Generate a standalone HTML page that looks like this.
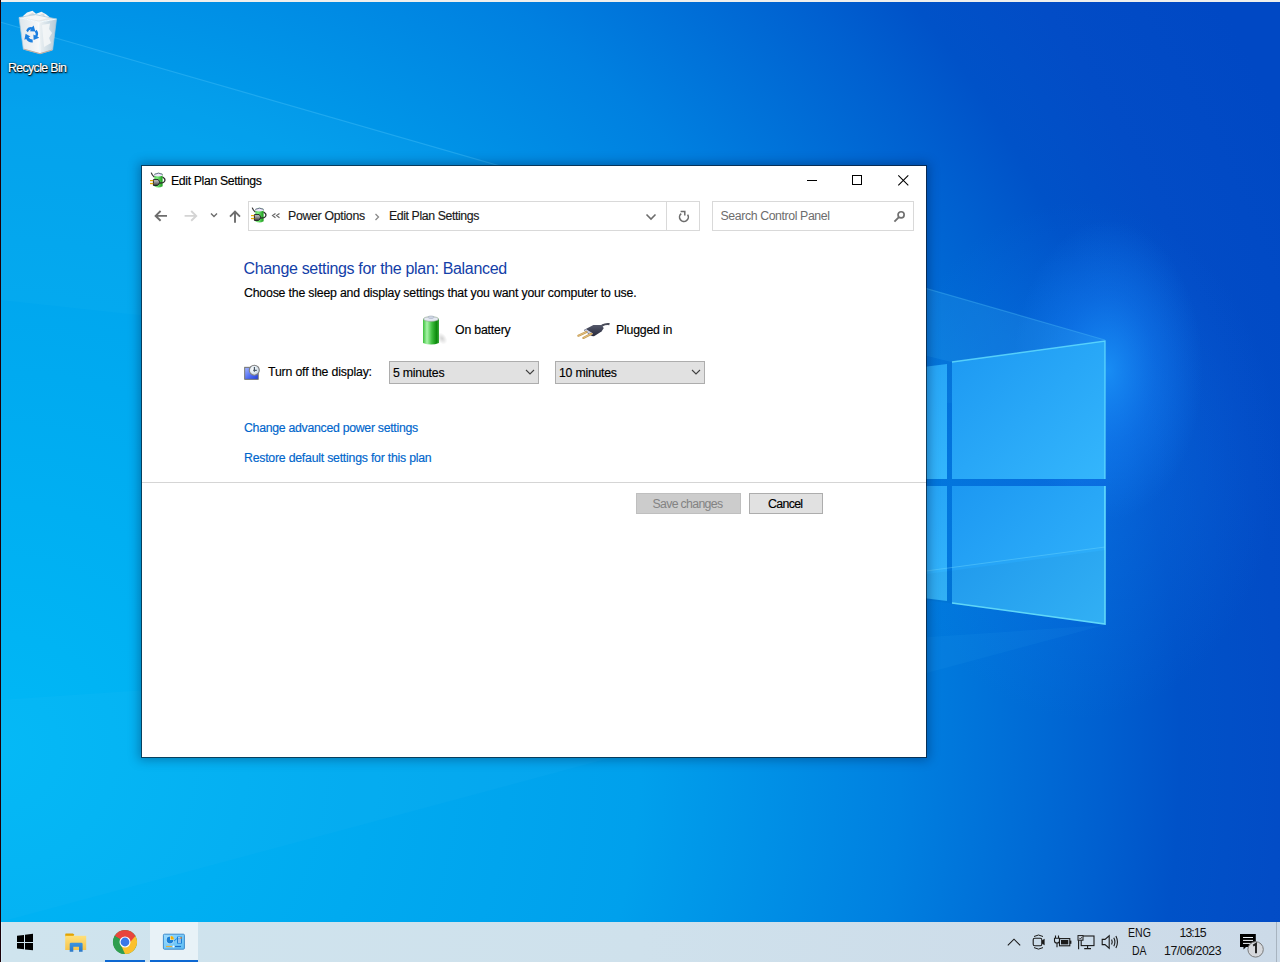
<!DOCTYPE html>
<html><head><meta charset="utf-8">
<style>
html,body{margin:0;padding:0;width:1280px;height:962px;overflow:hidden;background:#0078d7;}
body{position:relative;font-family:"Liberation Sans",sans-serif;}
.abs{position:absolute;}
.t{position:absolute;white-space:nowrap;line-height:16px;font-size:12px;color:#000;-webkit-text-stroke:0.15px currentColor;}
#wall{position:absolute;left:0;top:0;width:1280px;height:922px;}
#win{position:absolute;left:141px;top:165px;width:784px;height:591px;background:#fff;background-clip:padding-box;border:1px solid rgba(10,20,30,0.62);box-shadow:0 0 10px 2px rgba(0,20,60,0.35);}
#taskbar{position:absolute;left:0;top:922px;width:1280px;height:40px;background:linear-gradient(90deg,#cfe4ee 0%,#cfe1ec 50%,#ccdae8 100%);}
</style></head><body>
<svg id="wall" width="1280" height="922" viewBox="0 0 1280 922">
<defs>
<radialGradient id="g1" gradientUnits="userSpaceOnUse" cx="0" cy="750" r="1430">
<stop offset="0" stop-color="#00b8f6"/>
<stop offset="0.08" stop-color="#00b4f4"/>
<stop offset="0.448" stop-color="#00a0ec"/>
<stop offset="0.63" stop-color="#0080e0"/>
<stop offset="0.77" stop-color="#0060d0"/>
<stop offset="0.825" stop-color="#0052c8"/>
<stop offset="0.895" stop-color="#024cc6"/>
<stop offset="1" stop-color="#0048c4"/>
</radialGradient>
<radialGradient id="glow" cx="0" cy="0" r="1" gradientUnits="userSpaceOnUse" gradientTransform="translate(1108 370) scale(95 150)">
<stop offset="0" stop-color="#1e9cff" stop-opacity="0.75"/>
<stop offset="0.5" stop-color="#1a8cff" stop-opacity="0.35"/>
<stop offset="1" stop-color="#1a8cff" stop-opacity="0"/>
</radialGradient>
<radialGradient id="glow2" cx="0" cy="0" r="1" gradientUnits="userSpaceOnUse" gradientTransform="translate(1080 460) scale(200 260)">
<stop offset="0" stop-color="#1a8cff" stop-opacity="0.3"/>
<stop offset="1" stop-color="#1a8cff" stop-opacity="0"/>
</radialGradient>
<linearGradient id="pane" x1="0" y1="0" x2="1" y2="1">
<stop offset="0" stop-color="#1c98f2"/>
<stop offset="1" stop-color="#34b6fc"/>
</linearGradient>
</defs>
<rect width="1280" height="922" fill="url(#g1)"/>
<rect width="1280" height="922" fill="url(#glow2)"/>
<rect width="1280" height="922" fill="url(#glow)"/>
<polygon points="0,22 1105,340 1105,420 0,300" fill="#50d0ff" opacity="0.05"/>
<polygon points="700,223 1105,340 1105,400 700,300" fill="#50d0ff" opacity="0.11"/>
<polygon points="1105,625 0,922 0,700" fill="#50d0ff" opacity="0.06"/>
<line x1="0" y1="22" x2="1105" y2="340" stroke="#60d0ff" stroke-width="1.2" opacity="0.3"/>
<polygon points="780,385 947,364 947,479 780,479" fill="url(#pane)"/>
<polygon points="952,362 1105,341 1105,479 952,479" fill="url(#pane)"/>
<polygon points="780,486 947,486 947,601 780,580" fill="url(#pane)"/>
<polygon points="952,486 1105,486 1105,624 952,603" fill="url(#pane)"/>
<polyline points="952,362 1105,341 1105,479" fill="none" stroke="#6ae4ff" stroke-width="1.4" opacity="0.75"/>
<polyline points="1105,486 1105,624 952,603" fill="none" stroke="#6ae4ff" stroke-width="1.6" opacity="0.9"/>
<line x1="926" y1="571" x2="1105" y2="547" stroke="#7ae0ff" stroke-width="1" opacity="0.35"/>
<polygon points="926,574 1105,550 1105,624 926,600" fill="#000" opacity="0.03"/>
</svg>

<div id="win"></div>
<!-- title bar -->
<svg class="abs" style="left:150px;top:172px" width="16" height="16" viewBox="0 0 16 16">
<defs><linearGradient id="pg150" x1="0" x2="1" y1="0" y2="0"><stop offset="0" stop-color="#5ccf5c"/><stop offset="0.35" stop-color="#7ae87a"/><stop offset="1" stop-color="#189a18"/></linearGradient>
<linearGradient id="pp150" x1="0" x2="0" y1="0" y2="1"><stop offset="0" stop-color="#d8d8d8"/><stop offset="1" stop-color="#404040"/></linearGradient></defs>
<path d="M4.3 2.2 Q8.4 -0.6 12.6 2.2 L12.6 14.2 Q8.4 16.6 4.3 14.2 Z" fill="url(#pg150)"/>
<path d="M4.3 2.2 Q8.4 -0.2 12.6 2.2 L12.6 3.8 Q8.4 5 4.3 3.8 Z" fill="#ece8fa"/>
<path d="M4.3 2.4 Q8.4 0 12.6 2.4" fill="none" stroke="#55557a" stroke-width="0.8"/>
<path d="M1.2 0.6 Q2 3 4.2 5" fill="none" stroke="#333" stroke-width="1.2"/>
<path d="M12.6 5 Q16 7 14.5 9.5 Q13.5 11 9.5 11.2" fill="none" stroke="#2a2a2a" stroke-width="1.3"/>
<path d="M3.4 7.6 L8.2 7.6 Q9.6 9.2 9.6 10.6 Q9 12.5 7.4 13.4 L3.4 13.4 Z" fill="url(#pp150)" stroke="#151515" stroke-width="0.9"/>
<rect x="0" y="8" width="3.3" height="1.2" fill="#e4ac00"/>
<rect x="0" y="10.9" width="3.3" height="1.3" fill="#e4ac00"/>
</svg>
<div class="t" style="left:171.0px;top:172.52px;font-size:12.3px;letter-spacing:-0.370px;color:#000">Edit Plan Settings</div>
<!-- window controls -->
<div class="abs" style="left:807px;top:180px;width:10px;height:1px;background:#000"></div>
<div class="abs" style="left:852px;top:175px;width:8px;height:8px;border:1px solid #000"></div>
<svg class="abs" style="left:897px;top:175px" width="12" height="12" viewBox="0 0 12 12"><path d="M1.3 0.4 L11.3 10.4 M11.3 0.4 L1.3 10.4" stroke="#000" stroke-width="1.05"/></svg>
<!-- nav -->
<svg class="abs" style="left:154px;top:209px" width="14" height="14" viewBox="0 0 14 14"><path d="M1.8 6.9 H13 M6.6 2 L1.6 6.9 L6.6 11.8" fill="none" stroke="#6d6d6d" stroke-width="1.9"/></svg>
<svg class="abs" style="left:184px;top:209px" width="14" height="14" viewBox="0 0 14 14"><path d="M0.6 6.9 H12 M7.2 2 L12.2 6.9 L7.2 11.8" fill="none" stroke="#d4d4d4" stroke-width="1.9"/></svg>
<svg class="abs" style="left:210px;top:212px" width="8" height="6" viewBox="0 0 8 6"><path d="M1 1.5 L4 4.5 L7 1.5" fill="none" stroke="#6d6d6d" stroke-width="1.4"/></svg>
<svg class="abs" style="left:228px;top:210px" width="14" height="14" viewBox="0 0 14 14"><path d="M7 12.8 V1.8 M2 6.6 L7 1.6 L12 6.6" fill="none" stroke="#6d6d6d" stroke-width="1.9"/></svg>
<!-- address box -->
<div class="abs" style="left:248px;top:201px;width:450px;height:28px;border:1px solid #d9d9d9;background:#fff"></div>
<div class="abs" style="left:666px;top:202px;width:1px;height:28px;background:#d9d9d9"></div>
<svg class="abs" style="left:251px;top:207px" width="16" height="16" viewBox="0 0 16 16">
<defs><linearGradient id="pg251" x1="0" x2="1" y1="0" y2="0"><stop offset="0" stop-color="#5ccf5c"/><stop offset="0.35" stop-color="#7ae87a"/><stop offset="1" stop-color="#189a18"/></linearGradient>
<linearGradient id="pp251" x1="0" x2="0" y1="0" y2="1"><stop offset="0" stop-color="#d8d8d8"/><stop offset="1" stop-color="#404040"/></linearGradient></defs>
<path d="M4.3 2.2 Q8.4 -0.6 12.6 2.2 L12.6 14.2 Q8.4 16.6 4.3 14.2 Z" fill="url(#pg251)"/>
<path d="M4.3 2.2 Q8.4 -0.2 12.6 2.2 L12.6 3.8 Q8.4 5 4.3 3.8 Z" fill="#ece8fa"/>
<path d="M4.3 2.4 Q8.4 0 12.6 2.4" fill="none" stroke="#55557a" stroke-width="0.8"/>
<path d="M1.2 0.6 Q2 3 4.2 5" fill="none" stroke="#333" stroke-width="1.2"/>
<path d="M12.6 5 Q16 7 14.5 9.5 Q13.5 11 9.5 11.2" fill="none" stroke="#2a2a2a" stroke-width="1.3"/>
<path d="M3.4 7.6 L8.2 7.6 Q9.6 9.2 9.6 10.6 Q9 12.5 7.4 13.4 L3.4 13.4 Z" fill="url(#pp251)" stroke="#151515" stroke-width="0.9"/>
<rect x="0" y="8" width="3.3" height="1.2" fill="#e4ac00"/>
<rect x="0" y="10.9" width="3.3" height="1.3" fill="#e4ac00"/>
</svg>
<svg class="abs" style="left:271px;top:212px" width="10" height="8" viewBox="0 0 10 8"><path d="M4.5 1.5 L1.6 3.6 L4.5 5.7 M8.5 1.5 L5.6 3.6 L8.5 5.7" fill="none" stroke="#6a6a6a" stroke-width="1.25"/></svg>
<div class="t" style="left:288.0px;top:207.71px;font-size:12.3px;letter-spacing:-0.298px;color:#1a1a1a">Power Options</div>
<svg class="abs" style="left:374px;top:213px" width="6" height="8" viewBox="0 0 6 8"><path d="M1.5 1 L4.5 4 L1.5 7" fill="none" stroke="#8a8a8a" stroke-width="1.3"/></svg>
<div class="t" style="left:389.0px;top:207.71px;font-size:12.3px;letter-spacing:-0.399px;color:#1a1a1a">Edit Plan Settings</div>
<svg class="abs" style="left:645px;top:213px" width="12" height="8" viewBox="0 0 12 8"><path d="M1.5 1.5 L6 6 L10.5 1.5" fill="none" stroke="#6d6d6d" stroke-width="1.6"/></svg>
<svg class="abs" style="left:677px;top:209px" width="14" height="14" viewBox="0 0 14 14"><path d="M4.2 4.6 A4.4 4.4 0 1 0 10.6 5.6" fill="none" stroke="#6d6d6d" stroke-width="1.6"/><path d="M3.6 2.4 H7.8 V6.6" fill="none" stroke="#6d6d6d" stroke-width="1.5"/></svg>
<!-- search -->
<div class="abs" style="left:712px;top:201px;width:200px;height:28px;border:1px solid #d9d9d9;background:#fff"></div>
<div class="t" style="left:720.5px;top:207.73px;font-size:12.3px;letter-spacing:-0.391px;color:#6d6d6d;-webkit-text-stroke:0">Search Control Panel</div>
<svg class="abs" style="left:892px;top:210px" width="14" height="14" viewBox="0 0 14 14"><circle cx="9.1" cy="4.8" r="3.05" fill="none" stroke="#707070" stroke-width="1.7"/><path d="M6.9 7.1 L2.4 11.7" stroke="#707070" stroke-width="1.9"/></svg>
<!-- content -->
<div class="t" style="left:243.5px;top:260.66px;font-size:16.0px;letter-spacing:-0.328px;color:#1340a8;-webkit-text-stroke:0">Change settings for the plan: Balanced</div>
<div class="t" style="left:244.0px;top:285.26px;font-size:12.3px;letter-spacing:-0.186px;">Choose the sleep and display settings that you want your computer to use.</div>
<svg class="abs" style="left:420px;top:314px" width="28" height="32" viewBox="0 0 28 32">
<defs><linearGradient id="bg1" x1="0" x2="1" y1="0" y2="0"><stop offset="0" stop-color="#3cc03c"/><stop offset="0.25" stop-color="#a8f4a8"/><stop offset="0.55" stop-color="#40c040"/><stop offset="0.85" stop-color="#0c8a0c"/><stop offset="1" stop-color="#3aa83a"/></linearGradient>
<radialGradient id="bsh" cx="0.5" cy="0.5" r="0.5"><stop offset="0" stop-color="#000" stop-opacity="0.28"/><stop offset="1" stop-color="#000" stop-opacity="0"/></radialGradient></defs>
<ellipse cx="22" cy="24.5" rx="4.5" ry="6.5" transform="rotate(-35 22 24.5)" fill="url(#bsh)" opacity="0.6"/>
<path d="M3 5 Q11 2 19 5 L19 29 Q11 32 3 29 Z" fill="url(#bg1)"/>
<ellipse cx="11" cy="5" rx="7.6" ry="2.4" fill="#e4e8f2" stroke="#8aa08a" stroke-width="0.6"/>
<ellipse cx="11" cy="3.2" rx="3" ry="1.3" fill="#cfd6e4" stroke="#9aa4b8" stroke-width="0.5"/>
</svg>
<svg class="abs" style="left:574px;top:316px" width="40" height="28" viewBox="0 0 40 28">
<defs><linearGradient id="plg" x1="0" x2="0" y1="0" y2="1"><stop offset="0" stop-color="#55586a"/><stop offset="1" stop-color="#25283a"/></linearGradient></defs>
<path d="M28 9.5 Q32 7.5 35.5 8.2" fill="none" stroke="#4a4c5a" stroke-width="2.2"/>
<path d="M10.3 13.8 L19.4 9.1 L28.1 9.1 L29.7 12.2 L27.5 15.6 L20 20.3 L17.5 20 L10.3 14.7 Z" fill="url(#plg)"/>
<path d="M10.5 14.5 L17.5 19.5 L19 17.5 L12 13 Z" fill="#c8cce0"/>
<path d="M4.4 19.7 L12.5 15.9" stroke="#c89c50" stroke-width="2.2" stroke-linecap="round"/>
<path d="M9.4 21.9 L17.5 17.8" stroke="#c89c50" stroke-width="2.2" stroke-linecap="round"/>
<path d="M4.4 19.7 L12.5 15.9 M9.4 21.9 L17.5 17.8" stroke="#f4e0b0" stroke-width="0.7" opacity="0.8"/>
</svg>
<svg class="abs" style="left:242px;top:362px" width="20" height="20" viewBox="0 0 20 20">
<defs><linearGradient id="dg" x1="0" y1="0" x2="1" y2="1"><stop offset="0" stop-color="#a8b8ff"/><stop offset="0.6" stop-color="#4a68f0"/><stop offset="1" stop-color="#1a3ce0"/></linearGradient>
<radialGradient id="cg" cx="0.4" cy="0.4" r="0.6"><stop offset="0" stop-color="#ffffff"/><stop offset="1" stop-color="#c8d8e4"/></radialGradient></defs>
<rect x="2.7" y="5.3" width="13.5" height="12" fill="url(#dg)" stroke="#6a6a60" stroke-width="0.9"/>
<circle cx="12.3" cy="8.2" r="5" fill="url(#cg)" stroke="#808080" stroke-width="1.1"/>
<path d="M12.4 5 V9.8 M11.2 8.4 H14.8" stroke="#4a5a6a" stroke-width="1.2"/>
</svg>
<div class="t" style="left:455.0px;top:321.58px;font-size:12.3px;letter-spacing:-0.186px;">On battery</div>
<div class="t" style="left:616.0px;top:321.56px;font-size:12.3px;letter-spacing:-0.205px;">Plugged in</div>
<div class="t" style="left:268.0px;top:363.77px;font-size:12.3px;letter-spacing:-0.164px;">Turn off the display:</div>
<div class="abs" style="left:389px;top:361px;width:148px;height:21px;border:1px solid #adadad;background:#e1e1e1"></div>
<div class="t" style="left:393.0px;top:364.76px;font-size:12.3px;letter-spacing:-0.221px;">5 minutes</div>
<svg class="abs" style="left:525px;top:369px" width="10" height="7" viewBox="0 0 10 7"><path d="M1 1 L5 5 L9 1" fill="none" stroke="#404040" stroke-width="1.1"/></svg>
<div class="abs" style="left:555px;top:361px;width:148px;height:21px;border:1px solid #adadad;background:#e1e1e1"></div>
<div class="t" style="left:559.0px;top:364.75px;font-size:12.3px;letter-spacing:-0.238px;">10 minutes</div>
<svg class="abs" style="left:691px;top:369px" width="10" height="7" viewBox="0 0 10 7"><path d="M1 1 L5 5 L9 1" fill="none" stroke="#404040" stroke-width="1.1"/></svg>
<div class="t" style="left:244.0px;top:420.41px;font-size:12.3px;letter-spacing:-0.288px;color:#0066cc">Change advanced power settings</div>
<div class="t" style="left:244.0px;top:449.72px;font-size:12.3px;letter-spacing:-0.229px;color:#0066cc">Restore default settings for this plan</div>
<div class="abs" style="left:142px;top:482px;width:784px;height:1px;background:#d5d5d5"></div>
<div class="abs" style="left:636px;top:493px;width:103px;height:19px;border:1px solid #bfbfbf;background:#cccccc"></div>
<div class="t" style="left:652.5px;top:495.70px;font-size:12.3px;letter-spacing:-0.666px;color:#838383;-webkit-text-stroke:0">Save changes</div>
<div class="abs" style="left:749px;top:493px;width:72px;height:19px;border:1px solid #adadad;background:#e1e1e1"></div>
<div class="t" style="left:768.0px;top:495.74px;font-size:12.3px;letter-spacing:-0.641px;">Cancel</div>


<div id="taskbar"></div>
<!-- start -->
<svg class="abs" style="left:16px;top:933px" width="19" height="19" viewBox="0 0 19 19">
<path d="M1 2.8 L8 1.9 V9 H1 Z M9 1.8 L17 0.8 V9 H9 Z M1 10 H8 V16.3 L1 15.4 Z M9 10 H17 V17.3 L9 16.4 Z" fill="#000"/>
</svg>
<!-- explorer -->
<svg class="abs" style="left:64px;top:932px" width="24" height="22" viewBox="0 0 24 22">
<defs><linearGradient id="fy" x1="0" y1="0" x2="0" y2="1"><stop offset="0" stop-color="#ffe07a"/><stop offset="1" stop-color="#f7c44a"/></linearGradient>
<linearGradient id="fb" x1="0" y1="0" x2="0" y2="1"><stop offset="0" stop-color="#3d95e0"/><stop offset="1" stop-color="#2a78c8"/></linearGradient></defs>
<path d="M1.5 1.5 H9 L10.5 3 H1.5 Z" fill="#e0a000"/>
<rect x="1.2" y="2.2" width="8.6" height="2.6" rx="0.6" fill="#e3a400"/>
<rect x="1.2" y="3.8" width="21" height="14.2" fill="url(#fy)"/>
<path d="M5.7 19.8 V12 Q5.7 10.7 7 10.7 H17.3 Q18.6 10.7 18.6 12 V19.8 H15 V14.8 H9.3 V19.8 Z" fill="url(#fb)"/>
</svg>
<!-- chrome -->
<svg class="abs" style="left:112px;top:929px" width="26" height="26" viewBox="0 0 26 26">
<circle cx="13" cy="13" r="12" fill="#2a9a47"/>
<path d="M13 13 L2.6 7 A12 12 0 0 1 23.4 7 Z" fill="#e8453c"/>
<path d="M13 13 L23.4 7 A12 12 0 0 1 13 25 Z" fill="#fbc02d"/>
<path d="M13 13 L2.6 7 A12 12 0 0 0 13 25 Z" fill="#2f9e4f"/>
<path d="M13 7.3 L23.4 7 L18.2 13 Z" fill="#e8453c"/>
<path d="M18 15.8 L13 25 L8.7 15.6 Z" fill="#fbc02d"/>
<path d="M8.2 16 L2.6 7 L7.6 11 Z" fill="#2f9e4f"/>
<circle cx="13" cy="13" r="5.5" fill="#fff"/>
<circle cx="13" cy="13" r="4.4" fill="#3b78e7"/>
</svg>
<div class="abs" style="left:105px;top:960px;width:40px;height:2px;background:#0d68d2"></div>
<!-- control panel button -->
<div class="abs" style="left:150px;top:922px;width:48px;height:38px;background:#e8f2f7"></div>
<div class="abs" style="left:150px;top:960px;width:48px;height:2px;background:#0d68d2"></div>
<svg class="abs" style="left:162px;top:933px" width="24" height="18" viewBox="0 0 24 18">
<defs><linearGradient id="cpg" x1="0" y1="0" x2="1" y2="1"><stop offset="0" stop-color="#9adcff"/><stop offset="1" stop-color="#5cbcf4"/></linearGradient></defs>
<rect x="1.4" y="1.2" width="21" height="15" rx="1" fill="url(#cpg)" stroke="#3f8ccc" stroke-width="1"/>
<circle cx="8" cy="7" r="3.9" fill="#fff" opacity="0.6"/>
<path d="M8 7 V3.6 A3.4 3.4 0 1 0 11.4 7 Z" fill="#1b7fd6"/>
<path d="M8.6 6.4 V3.1 A3.4 3.4 0 0 1 11.9 6.4 Z" fill="#f8b000"/>
<path d="M12 8 Q13.5 7.5 14.5 5.5" stroke="#1b7fd6" stroke-width="0.9" fill="none"/>
<rect x="15" y="3.6" width="5" height="7" fill="#1b7fd6"/>
<rect x="16" y="4.4" width="3" height="1" fill="#fff"/>
<rect x="16" y="6.5" width="3" height="1" fill="#fff"/>
<rect x="16" y="8.5" width="3" height="1" fill="#fff"/>
<circle cx="19" cy="4.9" r="0.8" fill="#f08020"/>
<rect x="4" y="12.9" width="6" height="1.2" fill="#e4b040"/>
<circle cx="11.5" cy="13.5" r="1" fill="#fff"/>
<rect x="13" y="12.9" width="6" height="1.2" fill="#1b6fc6"/>
</svg>
<!-- tray -->
<svg class="abs" style="left:1006px;top:936px" width="16" height="12" viewBox="0 0 16 12"><path d="M1.8 9.4 L8 3.2 L14.2 9.4" fill="none" stroke="#1a1a1a" stroke-width="1.1"/></svg>
<svg class="abs" style="left:1031px;top:932px" width="16" height="20" viewBox="0 0 16 20">
<path d="M3 4.5 Q7.5 1.5 12 4.5 M3 15.6 Q7.5 18.6 12 15.6" fill="none" stroke="#1a1a1a" stroke-width="1"/>
<rect x="2.2" y="6.3" width="8.6" height="7.4" rx="1.5" fill="none" stroke="#1a1a1a" stroke-width="1.1"/>
<path d="M10.8 8.4 L13.6 6.8 V13.2 L10.8 11.6" fill="#1a1a1a"/>
</svg>
<svg class="abs" style="left:1053px;top:934px" width="20" height="15" viewBox="0 0 20 15">
<path d="M2.5 1.5 V4.2 M5.5 1.5 V4.2 M1.5 4.2 H6.5 V7 Q6.5 9 4 9 Q1.5 9 1.5 7 Z M4 9 V13.2" fill="none" stroke="#1a1a1a" stroke-width="1.1"/>
<rect x="6.5" y="4.6" width="10.3" height="7.2" fill="none" stroke="#1a1a1a" stroke-width="1.1"/>
<rect x="8" y="6" width="7.3" height="4.4" fill="#1a1a1a"/>
<rect x="16.8" y="6.6" width="1.6" height="3.2" fill="#1a1a1a"/>
</svg>
<svg class="abs" style="left:1077px;top:934px" width="18" height="16" viewBox="0 0 18 16">
<rect x="4.2" y="2" width="12.8" height="9.6" fill="none" stroke="#1a1a1a" stroke-width="1.1"/>
<path d="M10.6 11.6 V14.2 M7.2 14.6 H14" fill="none" stroke="#1a1a1a" stroke-width="1.1"/>
<rect x="1" y="1.6" width="5" height="4.6" fill="#cfd9e6" stroke="#1a1a1a" stroke-width="1"/>
<path d="M2.2 3.8 L3.4 5 L5 3" fill="none" stroke="#1a1a1a" stroke-width="0.8"/>
<path d="M1.6 6.2 V15.2" stroke="#1a1a1a" stroke-width="1.1"/>
</svg>
<svg class="abs" style="left:1100px;top:934px" width="20" height="16" viewBox="0 0 20 16">
<path d="M2.2 5.4 H5 L9.2 1.8 V14.2 L5 10.6 H2.2 Z" fill="none" stroke="#1a1a1a" stroke-width="1.1"/>
<path d="M11.6 5.6 Q12.8 8 11.6 10.4 M13.8 3.8 Q16 8 13.8 12.2 M15.9 2 Q19 8 15.9 14" fill="none" stroke="#1a1a1a" stroke-width="1.1"/>
</svg>
<div class="t" style="left:1128px;top:925.2px;font-size:12.3px;color:#111;-webkit-text-stroke:0;transform:scaleX(0.86);transform-origin:0 0">ENG</div>
<div class="t" style="left:1132px;top:942.7px;font-size:12.3px;color:#111;-webkit-text-stroke:0;transform:scaleX(0.85);transform-origin:0 0">DA</div>
<div class="t" style="left:1179.5px;top:924.7px;font-size:12.3px;letter-spacing:-0.95px;color:#111;-webkit-text-stroke:0">13:15</div>
<div class="t" style="left:1164px;top:942.7px;font-size:12.3px;letter-spacing:-0.45px;color:#111;-webkit-text-stroke:0">17/06/2023</div>
<svg class="abs" style="left:1238px;top:932px" width="28" height="28" viewBox="0 0 28 28">
<path d="M2 2 H17.8 V15 H8 L5.5 17.6 V15 H2 Z" fill="#000"/>
<path d="M5 5.5 H15 M5 8.4 H15 M5 11.4 H13" stroke="#eef2f6" stroke-width="1"/>
<circle cx="17.6" cy="17.4" r="7.7" fill="#d6d8dc" stroke="#7a7a7a" stroke-width="1"/>
<path d="M15.2 13.6 L18 11.8 V21.2" fill="none" stroke="#1e1e1e" stroke-width="1.9"/>
</svg>
<div class="abs" style="left:1276px;top:922px;width:1px;height:40px;background:#a8b4c0"></div>
<!-- desktop edges -->
<div class="abs" style="left:1px;top:922px;width:1px;height:40px;background:#d8eef8"></div>
<div class="abs" style="left:0;top:0;width:1280px;height:2px;background:#efefed"></div>
<div class="abs" style="left:0;top:0;width:1px;height:962px;background:#1c0008"></div>
<!-- recycle bin -->
<svg class="abs" style="left:16px;top:9px" width="44" height="48" viewBox="0 0 44 48">
<defs><linearGradient id="rbl" x1="0" y1="0" x2="1" y2="0"><stop offset="0" stop-color="#dde6ec"/><stop offset="1" stop-color="#f8f9fa"/></linearGradient>
<linearGradient id="rbr" x1="0" y1="0" x2="1" y2="0"><stop offset="0" stop-color="#eef2f4"/><stop offset="1" stop-color="#b4cad8"/></linearGradient></defs>
<path d="M3 8.5 L19 5.5 L40.5 10 L23 13.2 Z" fill="#e4e8ea"/>
<path d="M7 7 L11 3.5 L16.5 1.8 L20 4.8 L25.5 2.8 L30 5.2 L34 8.6 L23 11.5 L8 9 Z" fill="#f6f6f6"/>
<path d="M12 6 L17 3.5 L19 6.5 Z M24 5 L28 4.5 L29 8 Z" fill="#d8dcde"/>
<path d="M3 8.5 L23 13.2 L24 44.8 L7.3 40.2 Z" fill="url(#rbl)"/>
<path d="M23 13.2 L40.5 10 L36.6 41 L24 44.8 Z" fill="url(#rbr)"/>
<path d="M26 16 L34 14.5 L33 20 L36 24 L33 29 L35 34 L28 38 Z" fill="#f4f6f7" opacity="0.9"/>
<path d="M3 8.5 L23 13.2 L40.5 10 M23 13.2 L24 44.8" fill="none" stroke="#ffffff" stroke-width="0.9"/>
<path d="M3 8.5 L7.3 40.2 L24 44.8 L36.6 41 L40.5 10 L19 5.5 Z" fill="none" stroke="#a8c8dc" stroke-width="0.8" opacity="0.9"/>
<path d="M8 40.2 L24 44.6 L36.2 41" fill="none" stroke="#c4ac9c" stroke-width="1"/>
<g fill="#1a7fe0">
<path d="M10.2 21.5 Q12 17.6 16 18.2 L17.6 16.6 L19.4 22.4 L13.8 22.2 L15.2 20.6 Q12.8 20.4 11.8 23.2 Z"/>
<path d="M20.6 20.8 Q23.2 24 21.4 27.6 L23.2 28.8 L17.6 31 L17.4 25.6 L19.2 26.6 Q20.2 24.6 18.8 22.6 Z"/>
<path d="M16.8 33.4 Q12 33.8 10.2 30 L8.4 30.8 L9.6 24.8 L14.4 27.4 L12.6 28.2 Q13.8 30.6 16.6 30.6 Z"/>
</g>
</svg>
<div class="t" style="left:8.0px;top:60.01px;font-size:12.3px;letter-spacing:-0.603px;color:#fff;-webkit-text-stroke:0.2px #fff;text-shadow:0 1px 1px #000,1px 1px 2px rgba(0,0,0,0.8),0 0 2px rgba(0,0,0,0.6)">Recycle Bin</div>
</body></html>
